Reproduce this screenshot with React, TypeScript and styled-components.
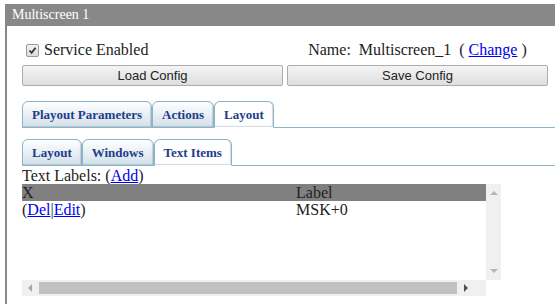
import styled, { createGlobalStyle } from 'styled-components';

const GlobalStyle = createGlobalStyle`
  body {
    margin: 0;
    background: #fff;
  }
`;

const serif = `'Liberation Serif', 'Times New Roman', serif`;

const Window = styled.div`
  margin: 4px 0 0 5px;
  border-left: 2px solid #888;
  height: 300px;
  box-sizing: border-box;
  font-family: ${serif};
`;

const Header = styled.div`
  height: 22px;
  background: #888;
  color: #fff;
  font-size: 14px;
  line-height: 22px;
  padding-left: 7px;
  margin-left: -2px;
`;

const Body = styled.div`
  padding: 14px 0 0 15px;
`;

const TopGrid = styled.div`
  display: grid;
  grid-template-columns: 1fr 1fr;
  column-gap: 4px;
  row-gap: 5px;
  padding-right: 7px;
  margin-bottom: 15px;
`;

const Cell = styled.div<{ $center?: boolean }>`
  font-size: 16px;
  display: flex;
  align-items: center;
  justify-content: ${(p) => (p.$center ? 'center' : 'flex-start')};
  height: 20px;
  color: #222;
`;

const CheckBox = styled.span`
  display: inline-flex;
  align-items: center;
  justify-content: center;
  width: 11px;
  height: 11px;
  margin: 0 5px 0 4px;
  border: 1px solid #9a9a9a;
  border-radius: 2px;
  background: linear-gradient(#f2f2f2, #dcdcdc);
`;

const Link = styled.a`
  color: #00e;
  text-decoration: underline;
  cursor: pointer;
`;

const Button = styled.button`
  height: 21px;
  width: 100%;
  font-family: 'Liberation Sans', Arial, sans-serif;
  font-size: 13px;
  color: #222;
  border: 1px solid #adadad;
  border-radius: 2px;
  background: linear-gradient(#f4f4f4, #dedede);
  padding: 0;
`;

const TabBar = styled.div<{ $gap: number }>`
  display: flex;
  align-items: flex-end;
  border-bottom: 1px solid #8fb3c6;
  margin-bottom: ${(p) => p.$gap}px;
`;

const Tab = styled.div<{ $active?: boolean }>`
  font-weight: bold;
  font-size: 13px;
  color: #1d3d8c;
  height: 25px;
  line-height: 26px;
  padding: 0 9px;
  margin-bottom: -1px;
  border: 1px solid #8fb3c6;
  border-bottom: ${(p) => (p.$active ? '1px solid #fff' : '1px solid #8fb3c6')};
  border-radius: 6px 6px 0 0;
  background: ${(p) => (p.$active ? '#fff' : 'linear-gradient(#ffffff, #d3e0e9)')};
  box-shadow: inset -1px -1px 1px rgba(120, 150, 170, 0.35);
`;

const Caption = styled.div`
  font-size: 16px;
  line-height: 17px;
  margin-top: 1px;
  color: #222;
`;

const Frame = styled.div`
  display: grid;
  grid-template-columns: 464px 15px;
  grid-template-rows: 96px 16px;
  width: 479px;
`;

const Viewport = styled.div`
  overflow: hidden;
`;

const Table = styled.table`
  width: 480px;
  border-collapse: collapse;
  font-size: 16px;
  color: #222;
  td,
  th {
    padding: 0;
    text-align: left;
    font-weight: normal;
    height: 17px;
    line-height: 17px;
  }
`;

const HeadRow = styled.tr`
  background: #808080;
`;

const LabelCol = styled.th`
  width: 206px;
`;

const VBar = styled.div`
  background: #f0f0f0;
  display: flex;
  flex-direction: column;
  justify-content: space-between;
  align-items: center;
  padding: 6px 0;
`;

const HBar = styled.div`
  background: #f0f0f0;
  display: flex;
  align-items: center;
  padding: 0 0 0 5px;
  gap: 6px;
`;

const Thumb = styled.div`
  height: 12px;
  width: 418px;
  background: #c1c1c1;
`;

const Corner = styled.div`
  background: #fff;
`;

const Arrow = ({ dir, color }: { dir: 'up' | 'down' | 'left' | 'right'; color: string }) => {
  const pts = {
    up: '0,5 4,1 8,5',
    down: '0,1 4,5 8,1',
    left: '5,0 1,4 5,8',
    right: '1,0 5,4 1,8',
  }[dir];
  const vertical = dir === 'up' || dir === 'down';
  return (
    <svg width={vertical ? 8 : 6} height={vertical ? 6 : 8} viewBox={vertical ? '0 0 8 6' : '0 0 6 8'}>
      <polygon points={pts} fill={color} />
    </svg>
  );
};

export default function App() {
  return (
    <>
      <GlobalStyle />
      <Window>
        <Header>Multiscreen 1</Header>
        <Body>
          <TopGrid>
            <Cell>
              <CheckBox>
                <svg width='9' height='9' viewBox='0 0 9 9'>
                  <path d='M1.5 4.5 L3.6 6.8 L7.6 1.8' stroke='#333' strokeWidth='1.8' fill='none' />
                </svg>
              </CheckBox>
              Service Enabled
            </Cell>
            <Cell $center>
              Name:&nbsp; Multiscreen_1&nbsp; (&nbsp;<Link>Change</Link>&nbsp;)
            </Cell>
            <Button>Load Config</Button>
            <Button>Save Config</Button>
          </TopGrid>
          <TabBar $gap={11}>
            <Tab>Playout Parameters</Tab>
            <Tab>Actions</Tab>
            <Tab $active>Layout</Tab>
          </TabBar>
          <TabBar $gap={0}>
            <Tab>Layout</Tab>
            <Tab>Windows</Tab>
            <Tab $active>Text Items</Tab>
          </TabBar>
          <Caption>
            Text Labels: (<Link>Add</Link>)
          </Caption>
          <Frame>
            <Viewport>
              <Table>
                <thead>
                  <HeadRow>
                    <th>X</th>
                    <LabelCol>Label</LabelCol>
                  </HeadRow>
                </thead>
                <tbody>
                  <tr>
                    <td>
                      (<Link>Del</Link>|<Link>Edit</Link>)
                    </td>
                    <td>MSK+0</td>
                  </tr>
                </tbody>
              </Table>
            </Viewport>
            <VBar>
              <Arrow dir='up' color='#b5b5b5' />
              <Arrow dir='down' color='#b5b5b5' />
            </VBar>
            <HBar>
              <Arrow dir='left' color='#a8a8a8' />
              <Thumb />
              <Arrow dir='right' color='#505050' />
            </HBar>
            <Corner />
          </Frame>
        </Body>
      </Window>
    </>
  );
}
